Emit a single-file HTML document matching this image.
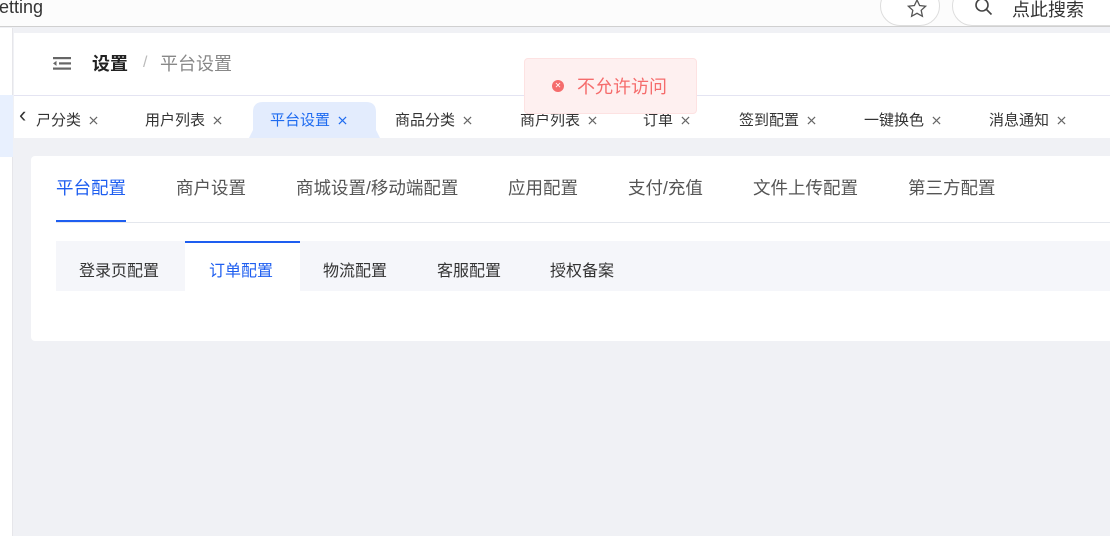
<!DOCTYPE html>
<html><head><meta charset="utf-8"><style>
*{margin:0;padding:0;box-sizing:border-box}
body{width:1110px;height:536px;overflow:hidden;background:#f0f1f5;font-family:"Liberation Sans","Noto Sans CJK SC",sans-serif;position:relative}
.abs{position:absolute}
.t{white-space:nowrap}
.x{margin-left:8px;vertical-align:0px}
</style></head><body>
<svg width="0" height="0" style="position:absolute"><defs><symbol id="cx" viewBox="0 0 10 10"><path d="M1 1L9 9M9 1L1 9" stroke="currentColor" stroke-width="1.3" fill="none"/></symbol></defs></svg>
<div class="abs" style="left:0;top:0;width:1110px;height:27px;background:#fcfcfc;border-bottom:1px solid #d0d0d0"></div>
<div class="abs t" style="left:-1px;top:-3px;font-size:18px;color:#333">etting</div>
<div class="abs" style="left:880px;top:-14px;width:60px;height:40px;border:1px solid #ddd;border-radius:20px;background:#fff"></div>
<svg class="abs" style="left:906px;top:-2px" width="22" height="22" viewBox="0 0 22 22"><path d="M11 2l2.6 5.5 6 .7-4.4 4.1 1.2 6L11 15.3 5.6 18.3l1.2-6L2.4 8.2l6-.7z" fill="none" stroke="#555" stroke-width="1.3"/></svg>
<div class="abs" style="left:952px;top:-14px;width:180px;height:40px;border:1px solid #ddd;border-radius:20px;background:#fff"></div>
<svg class="abs" style="left:973px;top:-3px" width="22" height="22"><circle cx="9" cy="8" r="6" fill="none" stroke="#444" stroke-width="1.6"/><path d="M13.5 12.5l5 5" stroke="#444" stroke-width="1.6"/></svg>
<div class="abs t" style="left:1012px;top:-4px;font-size:18px;color:#333">点此搜索</div>

<div class="abs" style="left:0;top:28px;width:13px;height:508px;background:#fff;border-right:1px solid #e6e6ea"></div>
<div class="abs" style="left:0;top:95px;width:13px;height:62px;background:#e8f0fe"></div>

<div class="abs" style="left:14px;top:33px;width:1096px;height:63px;background:#fff;border-bottom:1px solid #e4e4f2"></div>
<svg class="abs" style="left:53px;top:56px" width="19" height="15"><rect x="0" y="1" width="18" height="2.2" fill="#666"/><rect x="6" y="6.3" width="12" height="2.2" fill="#666"/><rect x="0" y="11.5" width="18" height="2.2" fill="#666"/><path d="M0 7.4l3.5-2.5v5z" fill="#666"/></svg>
<div class="abs t" style="left:92px;top:50px;font-size:18px;font-weight:bold;color:#222">设置</div>
<div class="abs t" style="left:143px;top:54px;font-size:16px;color:#bbb">/</div>
<div class="abs t" style="left:160px;top:50px;font-size:18px;color:#888">平台设置</div>

<div class="abs" style="left:14px;top:96px;width:1096px;height:42px;background:#fff"></div>
<div class="abs t" style="left:19px;top:102px;font-size:22px;color:#333">‹</div>
<svg class="abs" style="left:230px;top:102px" width="150" height="36"><path d="M19 36 L23 28 V10 Q23 0 33 0 H136 Q146 0 146 10 V28 L150 36 Z" fill="#e3ecfd"/></svg>
<div class="abs t" style="font-size:15px;color:#333;top:109px;left:0">
<span class="abs" style="left:36px">ㄕ分类<svg class="x" width="9" height="9" style="color:#666"><use href="#cx"/></svg></span>
<span class="abs" style="left:145px">用户列表<svg class="x" width="9" height="9" style="color:#666"><use href="#cx"/></svg></span>
<span class="abs" style="left:270px;color:#1e6bf0">平台设置<svg class="x" width="9" height="9" style="color:#1e6bf0"><use href="#cx"/></svg></span>
<span class="abs" style="left:395px">商品分类<svg class="x" width="9" height="9" style="color:#666"><use href="#cx"/></svg></span>
<span class="abs" style="left:520px">商户列表<svg class="x" width="9" height="9" style="color:#666"><use href="#cx"/></svg></span>
<span class="abs" style="left:643px">订单<svg class="x" width="9" height="9" style="color:#666"><use href="#cx"/></svg></span>
<span class="abs" style="left:739px">签到配置<svg class="x" width="9" height="9" style="color:#666"><use href="#cx"/></svg></span>
<span class="abs" style="left:864px">一键换色<svg class="x" width="9" height="9" style="color:#666"><use href="#cx"/></svg></span>
<span class="abs" style="left:989px">消息通知<svg class="x" width="9" height="9" style="color:#666"><use href="#cx"/></svg></span>
</div>

<div class="abs" style="left:524px;top:58px;width:173px;height:56px;background:#fef0f0;border:1px solid #fde2e2;border-radius:4px"></div>
<div class="abs" style="left:552px;top:80px;width:12px;height:12px;border-radius:50%;background:#f56c6c;color:#fff;font-size:8px;line-height:12px;text-align:center">✕</div>
<div class="abs t" style="left:577px;top:73px;font-size:18px;color:#f56c6c">不允许访问</div>

<div class="abs" style="left:31px;top:156px;width:1090px;height:185px;background:#fff;border-radius:4px"></div>
<div class="abs" style="left:56px;top:222px;width:1054px;height:1px;background:#e4e7ed"></div>
<div class="abs" style="left:56px;top:220px;width:70px;height:2px;background:#1e5ef0"></div>
<div class="abs t" style="font-size:17.5px;color:#555;top:175px;left:0">
<span class="abs" style="left:56px;color:#1e5ef0">平台配置</span>
<span class="abs" style="left:176px">商户设置</span>
<span class="abs" style="left:296px">商城设置/移动端配置</span>
<span class="abs" style="left:508px">应用配置</span>
<span class="abs" style="left:628px">支付/充值</span>
<span class="abs" style="left:753px">文件上传配置</span>
<span class="abs" style="left:908px">第三方配置</span>
</div>
<div class="abs" style="left:56px;top:241px;width:1054px;height:50px;background:#f5f6fa"></div>
<div class="abs" style="left:185px;top:241px;width:115px;height:50px;background:#fff;border-top:2px solid #1e5ef0"></div>
<div class="abs t" style="font-size:16px;color:#333;top:257px;left:0">
<span class="abs" style="left:79px">登录页配置</span>
<span class="abs" style="left:209px;color:#1e5ef0">订单配置</span>
<span class="abs" style="left:323px">物流配置</span>
<span class="abs" style="left:437px">客服配置</span>
<span class="abs" style="left:550px">授权备案</span>
</div>
</body></html>
